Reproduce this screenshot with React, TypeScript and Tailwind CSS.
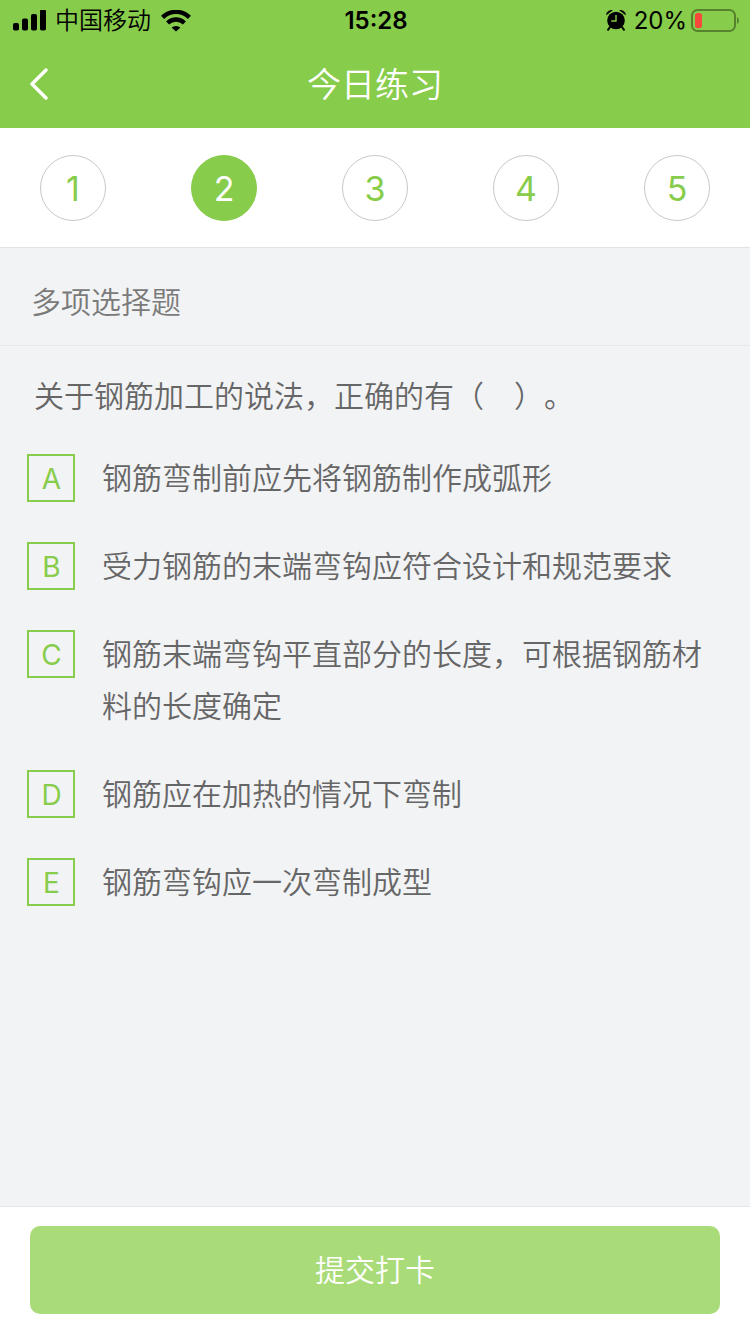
import { useState } from "react"

const steps = [1, 2, 3, 4, 5]

const options = [
  { key: "A", text: "钢筋弯制前应先将钢筋制作成弧形" },
  { key: "B", text: "受力钢筋的末端弯钩应符合设计和规范要求" },
  { key: "C", text: "钢筋末端弯钩平直部分的长度，可根据钢筋材料的长度确定" },
  { key: "D", text: "钢筋应在加热的情况下弯制" },
  { key: "E", text: "钢筋弯钩应一次弯制成型" },
]

function SignalIcon() {
  return (
    <svg width="34" height="22" viewBox="0 0 34 22" fill="black" aria-hidden="true">
      <rect x="0" y="13" width="6" height="7.5" rx="1.8" />
      <rect x="9" y="8.5" width="6" height="12" rx="1.8" />
      <rect x="18" y="4" width="6" height="16.5" rx="1.8" />
      <rect x="27" y="-0.5" width="6" height="21" rx="1.8" />
    </svg>
  )
}

function WifiIcon() {
  return (
    <svg width="30" height="22" viewBox="0 0 30 22" aria-hidden="true">
      <g fill="none" stroke="black" strokeWidth="4.4">
        <path d="M1.6 7.4 A19 19 0 0 1 28.4 7.4" />
        <path d="M6.6 13 A12 12 0 0 1 23.4 13" />
      </g>
      <path d="M15 21.5 L10.6 17.6 A6.6 6.6 0 0 1 19.4 17.6 Z" fill="black" />
    </svg>
  )
}

function AlarmIcon() {
  return (
    <svg width="20" height="22" viewBox="0 0 20 22" aria-hidden="true">
      <circle cx="10" cy="10.5" r="8.8" fill="black" />
      <path d="M0.6 4.6 Q0.8 0.6 6.4 0.2 Z M19.4 4.6 Q19.2 0.6 13.6 0.2 Z" fill="black" stroke="black" strokeWidth="0.8" strokeLinejoin="round" />
      <path d="M4 17 L2 19.8 M16 17 L18 19.8" stroke="black" strokeWidth="2" strokeLinecap="round" />
      <path d="M10 5 V11 H5.2" stroke="#87cc4b" strokeWidth="1.4" fill="none" />
    </svg>
  )
}

function BatteryIcon() {
  return (
    <svg width="48" height="24" viewBox="0 0 48 24" aria-hidden="true">
      <rect x="1" y="1" width="43" height="21" rx="5.5" fill="none" stroke="#56822f" strokeWidth="2" />
      <rect x="4" y="4" width="7" height="15" rx="2.5" fill="#f5493b" />
      <path d="M46 8 Q48 9 48 11.5 Q48 14 46 15 Z" fill="#56822f" />
    </svg>
  )
}

function StatusBar() {
  return (
    <div className="grid h-10 grid-cols-3 items-center pt-px pl-[13px] pr-[11px] text-2xl text-black">
      <div className="flex items-center gap-2">
        <SignalIcon />
        <span className="pr-[2px] font-[350]">中国移动</span>
        <WifiIcon />
      </div>
      <span className="text-center font-semibold">15:28</span>
      <div className="flex items-center justify-end gap-1">
        <AlarmIcon />
        <span className="pl-1">20%</span>
        <BatteryIcon />
      </div>
    </div>
  )
}

export default function App() {
  const [current, setCurrent] = useState(2)

  return (
    <main className="flex min-h-screen flex-col bg-[#f2f3f5] font-['Inter','Noto_Sans_CJK_SC',sans-serif] text-[#666666]">
      {/* Header */}
      <header className="bg-[#87cc4b]">
        <StatusBar />
        <div className="grid h-[88px] grid-cols-[80px_1fr_80px] items-center text-white">
          <button type="button" aria-label="返回" className="flex h-full items-center pl-[30px]">
            <svg width="18" height="32" viewBox="0 0 18 32" fill="none" stroke="white" strokeWidth="3.4" strokeLinecap="round" strokeLinejoin="round">
              <path d="M16 2 L2 16 L16 30" />
            </svg>
          </button>
          <h1 className="text-center text-[34px] font-[350]">今日练习</h1>
        </div>
      </header>

      {/* Question numbers */}
      <nav className="flex h-[120px] items-center justify-between border-b border-[#e2e3e5] bg-white px-10">
        {steps.map((step) => (
          <button
            key={step}
            type="button"
            onClick={() => setCurrent(step)}
            className={`flex size-[66px] items-center justify-center rounded-full border pt-px text-[34px] ${
              step === current ? "border-[#87cc4b] bg-[#87cc4b] text-white" : "border-[#c8c8c8] text-[#87cc4b]"
            }`}
          >
            {step}
          </button>
        ))}
      </nav>

      <h2 className="flex h-[98px] items-center border-b border-[#e6e7ea] px-[31px] pt-3 text-[30px] font-[350] text-[#7a7a7a]">
        多项选择题
      </h2>

      {/* Question */}
      <section className="flex-1 px-[27px] pt-6 text-[30px] leading-[52px] font-[350]">
        <p className="px-[7px] [text-spacing-trim:space-all]">关于钢筋加工的说法，正确的有（　）。</p>
        <div className="flex flex-col gap-9 pt-[30px]">
          {options.map((option) => (
            <label key={option.key} className="flex items-start gap-[27px]">
              <input type="checkbox" name="answer" value={option.key} className="peer sr-only" />
              <span className="my-[2px] flex size-12 shrink-0 items-center justify-center border-2 border-[#87cc4b] pt-px pl-px text-[28px] font-normal text-[#87cc4b] peer-checked:bg-[#87cc4b] peer-checked:text-white">
                {option.key}
              </span>
              <span className="[text-spacing-trim:space-all]">{option.text}</span>
            </label>
          ))}
        </div>
      </section>

      <footer className="border-t border-[#e6e7ea] bg-white px-[30px] pt-[19px] pb-5">
        <button type="button" className="h-[88px] w-full rounded-[10px] bg-[#a9dc79] text-[30px] font-[350] text-white">
          提交打卡
        </button>
      </footer>
    </main>
  )
}
